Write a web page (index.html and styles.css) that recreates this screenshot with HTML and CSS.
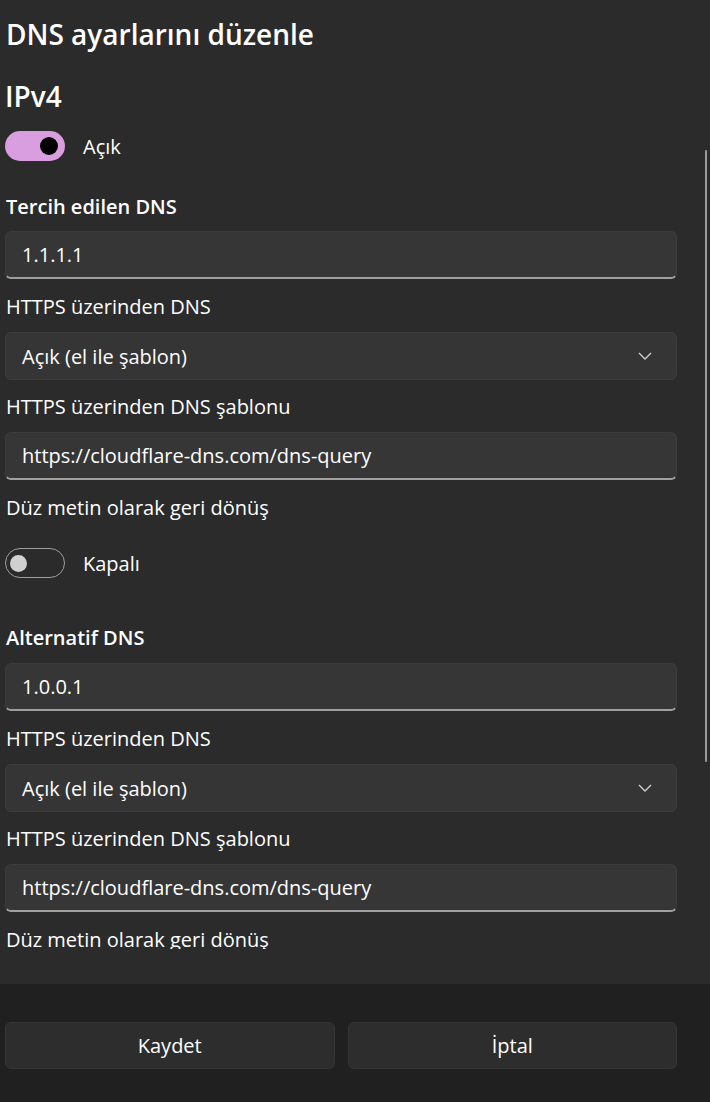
FILE: index.html
```html
<!DOCTYPE html>
<html lang="tr">
<head>
    <meta charset="UTF-8">
    <meta name="viewport" content="width=device-width, initial-scale=1.0">
    <title>DNS ayarlarını düzenle</title>
    <link rel="stylesheet" href="styles.css">
</head>
<body>

    <!-- Ayar paneli -->
    <div class="panel">
        <div class="scroll-area">
            <h1 class="title">DNS ayarlarını düzenle</h1>
            <h2 class="section">IPv4</h2>

            <div class="toggle-row">
                <div class="toggle on"><span class="knob"></span></div>
                <span class="toggle-label">Açık</span>
            </div>

            <!-- Tercih edilen -->
            <div class="group-head">Tercih edilen DNS</div>
            <div class="field input first">1.1.1.1</div>
            <div class="label">HTTPS üzerinden DNS</div>
            <div class="field select">
                <span>Açık (el ile şablon)</span>
                <svg class="chevron" width="14" height="8" viewBox="0 0 14 8"><path d="M1 1l6 6 6-6" fill="none" stroke="#d0d0d0" stroke-width="1.3"/></svg>
            </div>
            <div class="label">HTTPS üzerinden DNS şablonu</div>
            <div class="field input">https://cloudflare-dns.com/dns-query</div>
            <div class="label">Düz metin olarak geri dönüş</div>
            <div class="toggle-row off-row">
                <div class="toggle off"><span class="knob"></span></div>
                <span class="toggle-label">Kapalı</span>
            </div>

            <!-- Alternatif -->
            <div class="group-head alt">Alternatif DNS</div>
            <div class="field input">1.0.0.1</div>
            <div class="label">HTTPS üzerinden DNS</div>
            <div class="field select">
                <span>Açık (el ile şablon)</span>
                <svg class="chevron" width="14" height="8" viewBox="0 0 14 8"><path d="M1 1l6 6 6-6" fill="none" stroke="#d0d0d0" stroke-width="1.3"/></svg>
            </div>
            <div class="label">HTTPS üzerinden DNS şablonu</div>
            <div class="field input">https://cloudflare-dns.com/dns-query</div>
            <div class="label">Düz metin olarak geri dönüş</div>
        </div>
        <div class="scrollbar"></div>
    </div>

    <!-- Alt butonlar -->
    <div class="footer">
        <button class="btn">Kaydet</button>
        <button class="btn">İptal</button>
    </div>

</body>
</html>
```

FILE: styles.css
```css
body {
    margin: 0;
    background-color: #202020;
    color: #ffffff;
    font-family: "Open Sans", "Noto Sans", sans-serif;
    font-size: 20px;
}

.panel {
    position: relative;
    height: 984px;
    background-color: #2b2b2b;
}

.scroll-area {
    height: 949px;
    overflow: hidden;
    padding: 0 33px 0 5px;
}

.scrollbar {
    position: absolute;
    right: 3px;
    top: 150px;
    width: 2px;
    height: 612px;
    border-radius: 1px;
    background-color: #9b9b9b;
}

.title {
    margin: 14px 0 0 1px;
    height: 40px;
    line-height: 40px;
    font-size: 28px;
    font-weight: 600;
}

.section {
    margin: 22px 0 0 0;
    height: 40px;
    line-height: 40px;
    font-size: 28px;
    font-weight: 600;
}

.toggle-row {
    display: flex;
    align-items: center;
    gap: 18px;
    margin-top: 15px;
    height: 30px;
}

.off-row {
    margin-top: 26px;
}

.toggle {
    width: 60px;
    height: 30px;
    border-radius: 15px;
    box-sizing: border-box;
    display: flex;
    align-items: center;
}

.toggle.on {
    background-color: #d89ee0;
    justify-content: flex-end;
    padding: 0 7px;
}

.toggle.on .knob {
    width: 18px;
    height: 18px;
    border-radius: 50%;
    background-color: #000;
}

.toggle.off {
    border: 1.5px solid #9e9e9e;
    padding: 0 4px;
}

.toggle.off .knob {
    width: 17px;
    height: 17px;
    border-radius: 50%;
    background-color: #d0d0d0;
}

.group-head {
    margin: 32px 0 0 1px;
    height: 28px;
    line-height: 28px;
    font-weight: 600;
}

.group-head.alt {
    margin-top: 46px;
}

.label {
    margin: 14px 0 0 1px;
    height: 28px;
    line-height: 28px;
}

.select + .label {
    margin-top: 13px;
}

.field {
    margin-top: 11px;
    height: 48px;
    box-sizing: border-box;
    border-radius: 6px;
    display: flex;
    align-items: center;
    padding: 0 16px;
    background-color: #363636;
    border: 1px solid #3c3c3c;
}

.field.first {
    margin-top: 10px;
}

.field.input {
    border-bottom: 2px solid #a0a0a0;
}

.field.select {
    background-color: #353535;
    justify-content: space-between;
    padding-right: 24px;
}

.footer {
    height: 118px;
    box-sizing: border-box;
    padding: 38px 33px 0 5px;
    display: flex;
    gap: 13px;
}

.btn {
    flex: 1;
    height: 47px;
    background-color: #2d2d2d;
    border: 1px solid #353535;
    border-radius: 6px;
    color: #ffffff;
    font-family: inherit;
    font-size: 20px;
}
```
